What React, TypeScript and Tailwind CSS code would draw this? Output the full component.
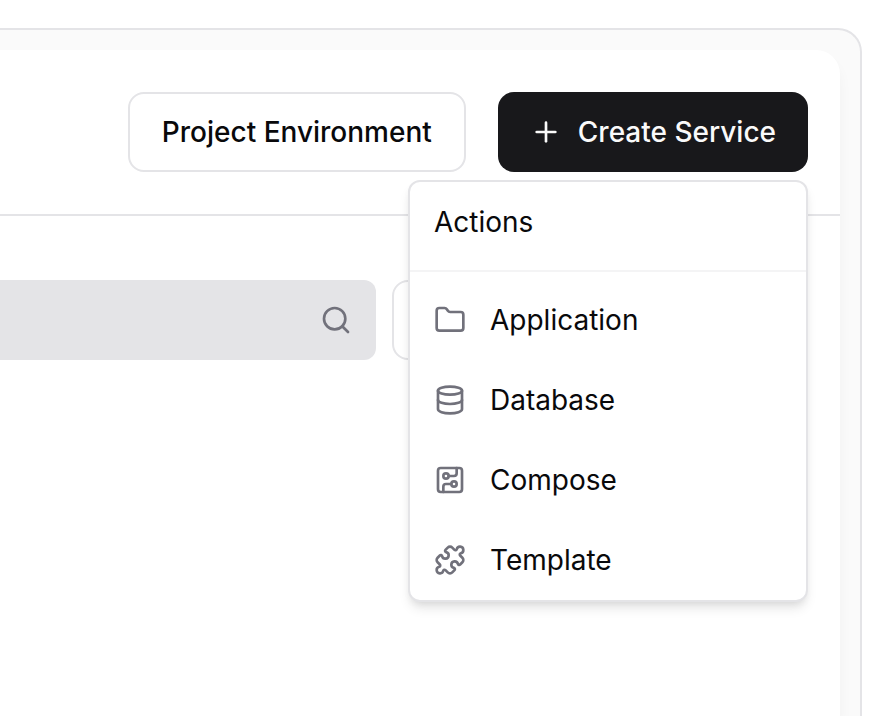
import { CircuitBoard, Database, Folder, Plus, Puzzle, Search } from "lucide-react";

const services = [
  { label: "Application", icon: Folder },
  { label: "Database", icon: Database },
  { label: "Compose", icon: CircuitBoard },
  { label: "Template", icon: Puzzle },
];

function ActionsMenu() {
  return (
    <div
      role="menu"
      aria-labelledby="actions-label"
      className="absolute right-0 top-full z-10 mt-2 w-[400px] rounded-xl border-2 border-zinc-200 bg-white shadow-[0_8px_12px_-2px_rgba(0,0,0,0.1),0_4px_8px_-4px_rgba(0,0,0,0.1)]"
    >
      <div id="actions-label" className="px-6 py-5 leading-10">
        Actions
      </div>
      <div role="separator" className="my-2 h-0.5 bg-zinc-100" />
      {services.map(({ label, icon: Icon }) => (
        <button
          key={label}
          type="button"
          role="menuitem"
          className="flex w-full items-center gap-6 px-6 py-5 text-left leading-10"
        >
          <Icon size={32} className="shrink-0 text-zinc-500" aria-hidden="true" />
          {label}
        </button>
      ))}
    </div>
  );
}

export default function App() {
  return (
    <div className="flex min-h-screen flex-col bg-white pr-3 pt-7 font-[Inter,'Liberation_Sans',sans-serif] text-[28px] text-zinc-950">
      <div className="flex flex-1 flex-col rounded-tr-[24px] border-r-2 border-t-2 border-zinc-200 bg-[#fafafa] pr-5 pt-5">
        <main className="flex-1 rounded-tr-[24px] bg-white shadow-[0_10px_14px_rgba(0,0,0,0.04)]">
          <header className="flex items-center justify-end gap-8 border-b-2 border-zinc-200 py-[42px] pr-8">
            <button
              type="button"
              className="h-20 rounded-2xl border-2 border-zinc-200 bg-white px-8 font-medium"
            >
              Project Environment
            </button>
            <div className="relative">
              <button
                type="button"
                aria-haspopup="menu"
                aria-expanded="true"
                className="flex h-20 items-center gap-4 rounded-2xl bg-zinc-900 px-8 font-medium text-zinc-50"
              >
                <Plus size={32} aria-hidden="true" />
                Create Service
              </button>
              <ActionsMenu />
            </div>
          </header>
          <section className="flex gap-4 pr-8 pt-16">
            <div className="relative min-w-0 flex-1">
              <input
                type="text"
                aria-label="Filter services"
                className="h-20 w-full rounded-r-xl bg-zinc-200 pl-6 pr-20 outline-none"
              />
              <Search
                size={32}
                className="pointer-events-none absolute right-6 top-6 text-zinc-500"
                aria-hidden="true"
              />
            </div>
            <select
              aria-label="Service types"
              className="h-20 w-[416px] appearance-none rounded-2xl border-2 border-zinc-200 bg-white px-6"
            />
          </section>
        </main>
      </div>
    </div>
  );
}
